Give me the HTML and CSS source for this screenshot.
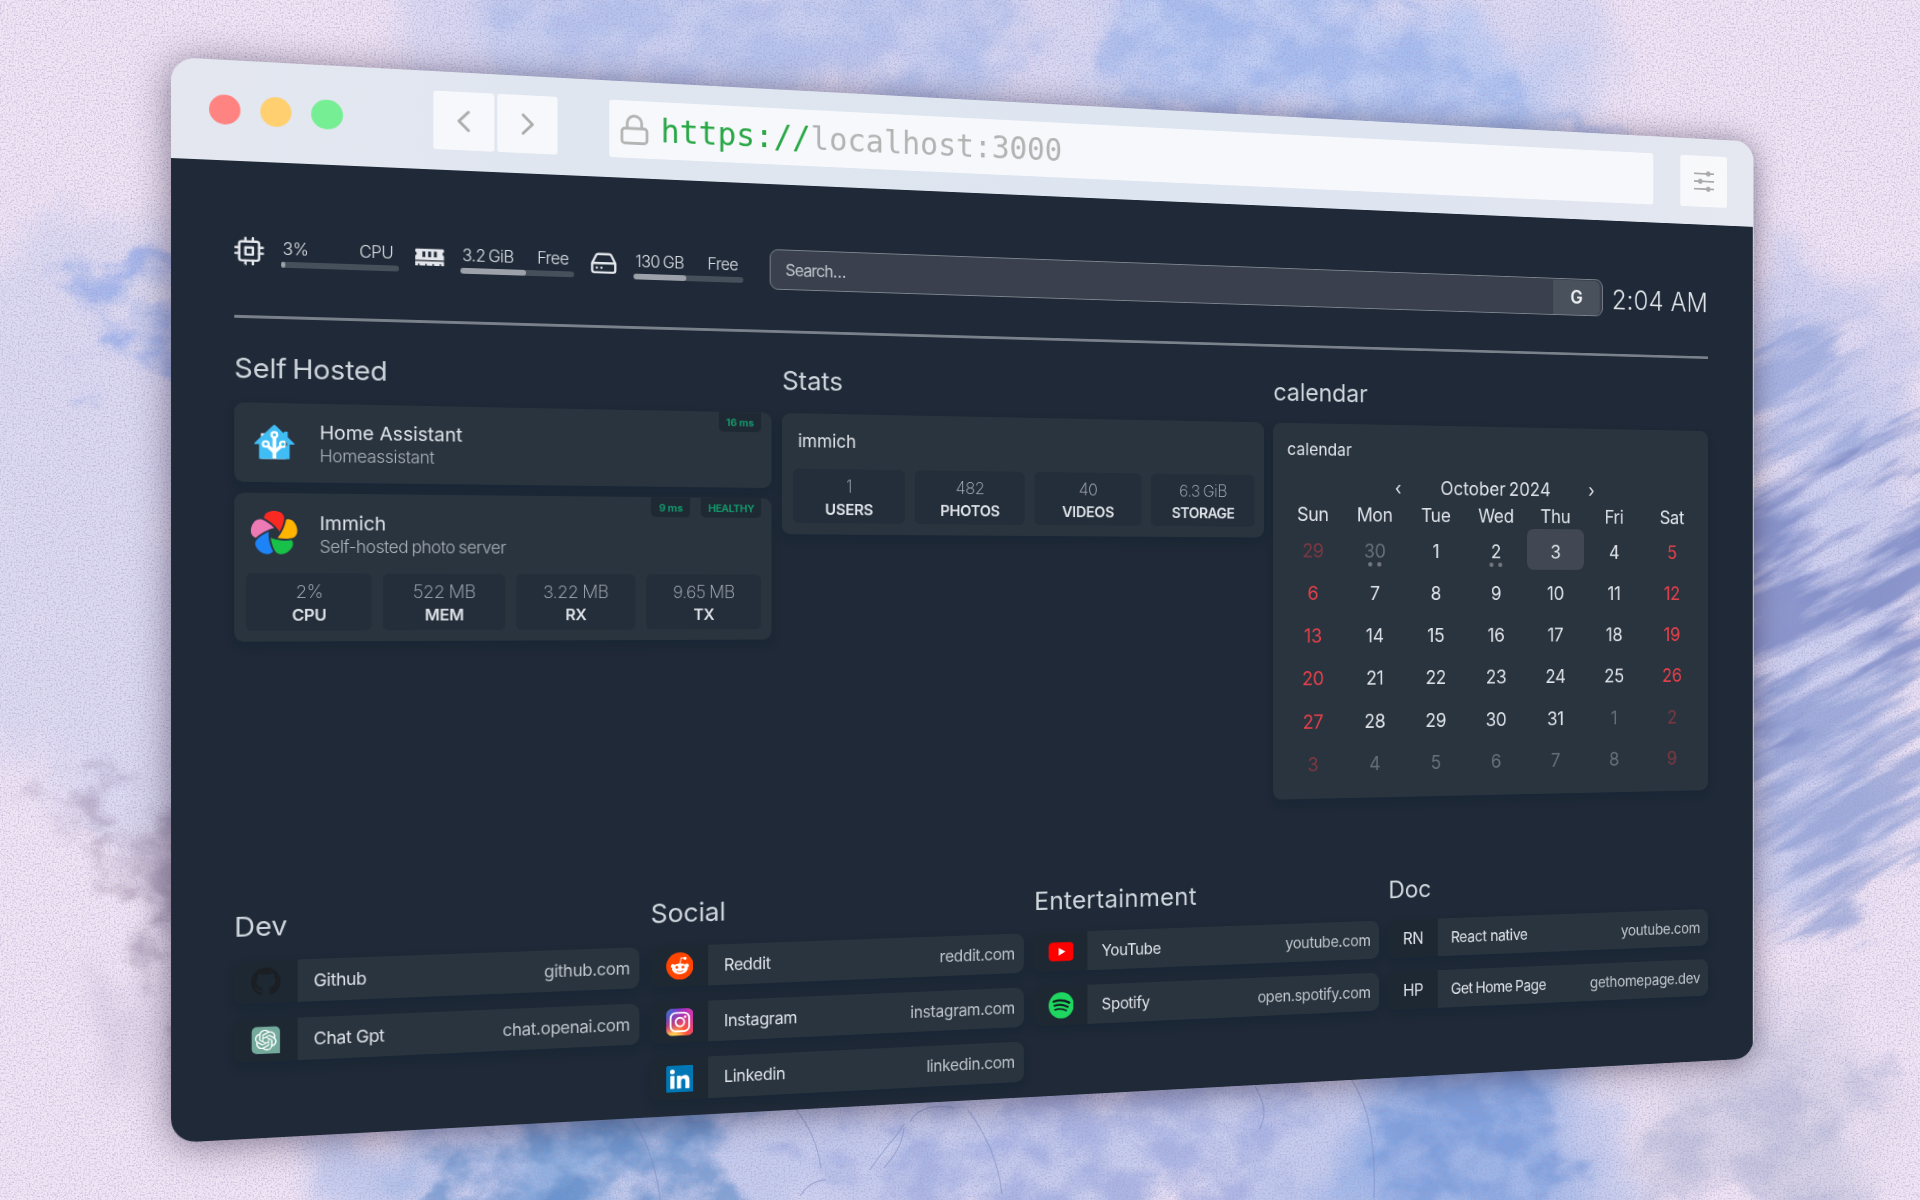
FILE: index.html
```html
<!DOCTYPE html>
<html lang="en">
<head>
<meta charset="utf-8">
<title>Homepage</title>
<link rel="stylesheet" href="styles.css">
</head>
<body>
<svg class="wallpaper" viewBox="0 0 1920 1200" aria-hidden="true">
  <defs>
    <filter id="paint" x="-20%" y="-20%" width="140%" height="140%">
      <feGaussianBlur stdDeviation="10" result="b"/>
      <feTurbulence type="fractalNoise" baseFrequency="0.012 0.016" numOctaves="8" seed="8" result="n"/>
      <feDisplacementMap in="b" in2="n" scale="170" xChannelSelector="R" yChannelSelector="G" result="d"/>
      <feTurbulence type="fractalNoise" baseFrequency="0.02 0.026" numOctaves="8" seed="21"/>
      <feColorMatrix values="0 0 0 0 0  0 0 0 0 0  0 0 0 0 0  3 0 0 0 -.95" result="m"/>
      <feComposite in="d" in2="m" operator="in"/>
    </filter>
    <filter id="streak" x="-30%" y="-30%" width="160%" height="160%">
      <feGaussianBlur stdDeviation="12" result="b"/>
      <feTurbulence type="fractalNoise" baseFrequency="0.007 0.03" numOctaves="8" seed="15" result="n"/>
      <feDisplacementMap in="b" in2="n" scale="190" xChannelSelector="R" yChannelSelector="G" result="d"/>
      <feTurbulence type="fractalNoise" baseFrequency="0.006 0.04" numOctaves="8" seed="33"/>
      <feColorMatrix values="0 0 0 0 0  0 0 0 0 0  0 0 0 0 0  4 0 0 0 -1.450" result="m"/>
      <feComposite in="d" in2="m" operator="in"/>
    </filter>
    <filter id="wash" x="-20%" y="-20%" width="140%" height="140%">
      <feGaussianBlur stdDeviation="26" result="b"/>
      <feTurbulence type="fractalNoise" baseFrequency="0.007" numOctaves="8" seed="4" result="n"/>
      <feDisplacementMap in="b" in2="n" scale="220" xChannelSelector="R" yChannelSelector="G"/>
    </filter>
    <filter id="grain" x="0" y="0" width="100%" height="100%">
      <feTurbulence type="fractalNoise" baseFrequency="0.55" numOctaves="3" seed="3"/>
      <feColorMatrix values="0 0 0 0 .33  0 0 0 0 .3  0 0 0 0 .5  0 1.6 0 0 -.72"/>
    </filter>
  </defs>
  <rect width="1920" height="1200" fill="#f0e4f5"/>
  <g filter="url(#wash)">
    <path fill="#dad8f2" d="M340-60h1300l-100 230H500L400 90z"/>
    <path fill="#dcd9f1" d="M-60 250l300-20v620l-300-120z"/>
    <path fill="#c0ccf0" opacity=".75" d="M500-40h520l-30 130-420 30z"/>
    <path fill="#b6caf4" opacity=".8" d="M1090-40h260l240 170-130 50-330-80z"/>
    <path fill="#cbcfef" opacity=".95" d="M1740 270l180 30v380l-60 230-130 40z"/>
    <path fill="#c6ccee" d="M310 1100l1330-80v220H330z"/>
    <path fill="#6d9dd8" opacity=".6" d="M450 1120l280-30-60 140H450z"/>
    <path fill="#8aabe6" opacity=".7" d="M1340 1070l200-10 30 180h-220z"/>
    <path fill="#a79fc2" opacity=".5" d="M120 800l70 20v260l-30-90z"/>
    <path fill="#d6d1e6" d="M1700 1060l200-10-100 160-160-10z"/>
  </g>
  <g filter="url(#paint)" opacity=".62">
    <path fill="#86a3e8" d="M80 275l200-30v190l-60-20-120-60z"/>
    <path fill="#a3b5ea" opacity=".7" d="M450-40h570l-60 190H600z"/>
    <path fill="#8fabe9" opacity=".75" d="M1100-30l260 10 260 160-160 60-330-110z"/>
    <path fill="#3f78bc" opacity=".8" d="M440 1120l310-40-40 160H440z"/>
    <path fill="#8799d8" opacity=".7" d="M800 1120l520-50-30 180-420-20z"/>
    <path fill="#5d88d2" opacity=".75" d="M1380 1050l180-20 0 200-180-10z"/>
    <path fill="#7e6c88" opacity=".65" d="M90 830l110-30 10 60v250l-70-140z"/>
    <path fill="#8f7f9e" opacity=".7" d="M20 775l80 0-30 70z"/>
    <path fill="#9da4cc" opacity=".5" d="M1640 1110l240-60-70 160-140 20z"/>
  </g>
  <g transform="rotate(-28 1830 600)" filter="url(#streak)" opacity=".8">
    <path fill="#6577bb" opacity=".85" d="M1690 480l290 20 10 160-300 40z"/>
    <path fill="#8597d0" opacity=".8" d="M1640 680l250 0-10 240-250-60z"/>
    <path fill="#8fa2da" opacity=".8" d="M1740 320l240 60v120l-260-30z"/>
  </g>
  <g fill="none" stroke="#6f83b8" stroke-opacity=".4" stroke-width="1.300">
    <path d="M870 1170c14-22 28-34 34-46M884 1168c10-12 18-22 20-40M910 1122c8-14 24-18 44-14M795 1108c14 18 22 34 26 60M630 1115c14 22 26 46 30 85M968 1110c18 24 30 50 34 84M1255 1086c10 18 12 30 4 44M1352 1080c16 26 24 60 22 118M800 1196c8-12 16-16 26-16"/>
  </g>
  <rect width="1920" height="1200" filter="url(#grain)" opacity=".7"/>
</svg>

<div class="window">
  <header class="toolbar">
    <div class="lights"><i class="light red"></i><i class="light amber"></i><i class="light green"></i></div>
    <div class="nav">
      <span class="tool"><svg width="16" height="26" viewBox="0 0 16 26"><path d="M13 3.500 3.500 13l9.500 9.500" class="chev"/></svg></span>
      <span class="tool"><svg width="16" height="26" viewBox="0 0 16 26"><path d="M3 3.500 12.500 13 3 22.500" class="chev"/></svg></span>
    </div>
    <div class="address">
      <svg class="lock" width="31" height="33" viewBox="0 0 31 33"><rect x="2" y="15" width="26" height="15.500" rx="3"/><path d="M7.500 15V9.500a7.500 7.500 0 0 1 15 0V15"/></svg>
      <span class="url"><b>https://</b>localhost:3000</span>
    </div>
    <span class="tool settings"><svg width="28" height="26" viewBox="0 0 28 26"><path d="M1 4h26M1 13h26M1 22h26" stroke="#a9a9a9" stroke-width="1.900"/><g fill="#a9a9a9"><circle cx="19.500" cy="4" r="2.900"/><circle cx="9" cy="13" r="2.900"/><circle cx="19.500" cy="22" r="2.900"/></g></svg></span>
  </header>

  <main class="page">
    <section class="info">
      <div class="resource">
        <svg class="ricon line" viewBox="0 0 24 24"><rect x="4" y="4" width="16" height="16" rx="2"/><rect x="9" y="9" width="6" height="6"/><path d="M9 1v3M15 1v3M9 20v3M15 20v3M20 9h3M20 14h3M1 9h3M1 14h3"/></svg>
        <div class="meter"><div class="labels"><span>3%</span><span>CPU</span></div><div class="bar"><i style="width:4%"></i></div></div>
      </div>
      <div class="resource">
        <svg class="ricon" viewBox="0 0 640 512" fill="currentColor"><path fill-rule="evenodd" d="M640 131V96c0-18-14-32-32-32H32C14 64 0 78 0 96v35c19 7 32 24 32 45s-13 38-32 45v99h640v-99c-19-7-32-24-32-45s13-38 32-45zM224 256h-64V128h64zm128 0h-64V128h64zm128 0h-64V128h64zM0 448h64v-27a16 16 0 0 1 32 0v27h128v-27a16 16 0 0 1 32 0v27h128v-27a16 16 0 0 1 32 0v27h128v-27a16 16 0 0 1 32 0v27h64v-96H0z"/></svg>
        <div class="meter"><div class="labels"><span>3.2 GiB</span><span>Free</span></div><div class="bar"><i style="width:57%"></i></div></div>
      </div>
      <div class="resource">
        <svg class="ricon line" viewBox="0 0 24 24"><path d="M22 12H2M5.450 5.110 2 12v6a2 2 0 0 0 2 2h16a2 2 0 0 0 2-2v-6l-3.450-6.890A2 2 0 0 0 16.760 4H7.240a2 2 0 0 0-1.790 1.110zM6 16h.01M10 16h.01"/></svg>
        <div class="meter"><div class="labels"><span>130 GB</span><span>Free</span></div><div class="bar"><i style="width:48%"></i></div></div>
      </div>
      <div class="search"><span class="placeholder">Search…</span><span class="engine">G</span></div>
      <div class="clock">2:04 AM</div>
    </section>
    <hr class="rule">

    <section class="services">
      <div class="group">
        <h2>Self Hosted</h2>
        <article class="card">
          <div class="head">
            <span class="logo"><svg width="39" height="34.400" viewBox="1.400 2.300 21.200 18.700"><path fill="#fff" d="M5 7h13v14H5z M12 4l6 6H6z"/><path fill="#41bdf5" d="M21.800,13H20V21H13V17.670L15.790,14.880L16.500,15C17.660,15 18.600,14.060 18.600,12.900C18.600,11.740 17.660,10.800 16.500,10.800A2.100,2.100 0 0,0 14.400,12.900L14.500,13.610L13,15.130V9.650C13.660,9.290 14.100,8.600 14.100,7.800A2.100,2.100 0 0,0 12,5.700A2.100,2.100 0 0,0 9.900,7.800C9.900,8.600 10.340,9.290 11,9.650V15.130L9.500,13.610L9.600,12.900A2.100,2.100 0 0,0 7.500,10.800A2.100,2.100 0 0,0 5.400,12.900A2.100,2.100 0 0,0 7.500,15L8.210,14.880L11,17.670V21H4V13H2.250C1.830,13 1.420,13 1.420,12.790C1.430,12.570 1.850,12.150 2.280,11.720L11,3C11.330,2.670 11.670,2.330 12,2.330C12.330,2.330 12.670,2.670 13,3L17,7V6H19V9L21.780,11.780C22.180,12.180 22.590,12.590 22.600,12.800C22.600,13 22.200,13 21.800,13Z"/><g fill="#41bdf5"><circle cx="7.500" cy="12.900" r=".9"/><circle cx="16.500" cy="12.900" r=".9"/><circle cx="12" cy="7.800" r=".9"/></g></svg></span>
            <div><div class="name">Home Assistant</div><div class="desc">Homeassistant</div></div>
          </div>
          <div class="badges"><span>16 ms</span></div>
        </article>
        <article class="card">
          <div class="head">
            <span class="logo"><svg width="44.700" height="44" viewBox="103 95 587 581"><path fill="#fa2921" d="M375.480,267.630c38.640,34.210,69.780,70.870,89.820,105.420c34.420-61.560,57.420-134.710,57.710-181.300c0-.33,0-.63,0-.91c0-68.940-68.770-95.770-128.010-95.770s-128.010,26.830-128.010,95.770c0,.94,0,2.200,0,3.720C300.010,209.240,339.150,235.470,375.480,267.630z"/><path fill="#ed79b5" d="M164.700,455.630c24.150-26.870,61.200-55.990,103.010-80.610c44.480-26.180,88.970-44.470,128.020-52.840c-47.910-51.760-110.370-96.240-154.600-110.910c-.31-.1-.6-.19-.86-.28c-65.570-21.300-112.340,35.810-130.640,92.150c-18.300,56.340-14.040,130.040,51.530,151.340C162.050,454.770,163.250,455.160,164.700,455.630z"/><path fill="#ffb400" d="M681.070,302.190c-18.300-56.340-65.070-113.450-130.640-92.150c-.9,.29-2.100,.68-3.540,1.150c-3.750,35.930-16.600,81.270-35.960,125.760c-20.590,47.320-45.840,88.270-72.510,118c69.180,13.720,145.860,12.980,190.260-1.140c.31-.1,.6-.2,.86-.28C695.110,432.220,699.370,358.520,681.070,302.190z"/><path fill="#1e83f7" d="M336.540,510.710c-11.150-50.390-14.800-98.360-10.700-138.080c-64.030,29.570-125.630,75.230-153.260,112.760c-.19,.26-.37,.51-.53,.73c-40.520,55.780-.66,117.910,47.270,152.720c47.920,34.820,119.330,53.540,159.860-2.240c.56-.76,1.300-1.780,2.190-3.010C363.280,602.320,347.020,558.080,336.540,510.710z"/><path fill="#18c249" d="M617.570,482.520c-35.330,7.540-82.420,9.330-130.720,4.660c-51.370-4.960-98.110-16.320-134.630-32.500c8.330,70.030,32.730,142.730,59.880,180.600c.19,.26,.37,.51,.53,.73c40.520,55.780,111.930,37.060,159.860,2.240c47.920-34.820,87.790-96.950,47.270-152.720C619.200,484.770,618.460,483.750,617.570,482.520z"/></svg></span>
            <div><div class="name">Immich</div><div class="desc long">Self-hosted photo server</div></div>
          </div>
          <div class="badges"><span>9 ms</span><span class="healthy">HEALTHY</span></div>
          <div class="stats">
            <div class="stat"><span>2%</span><b>CPU</b></div>
            <div class="stat"><span>522 MB</span><b>MEM</b></div>
            <div class="stat"><span>3.22 MB</span><b>RX</b></div>
            <div class="stat"><span>9.65 MB</span><b>TX</b></div>
          </div>
        </article>
      </div>

      <div class="group">
        <h2>Stats</h2>
        <article class="card">
          <div class="title">immich</div>
          <div class="stats">
            <div class="stat"><span>1</span><b>USERS</b></div>
            <div class="stat"><span>482</span><b>PHOTOS</b></div>
            <div class="stat"><span>40</span><b>VIDEOS</b></div>
            <div class="stat"><span>6.3 GiB</span><b class="tight">STORAGE</b></div>
          </div>
        </article>
      </div>

      <div class="group">
        <h2>calendar</h2>
        <article class="card calendar">
          <div class="title">calendar</div>
          <div class="month"><span>‹</span><span class="mname">October 2024</span><span>›</span></div>
          <div class="week names"><span>Sun</span><span>Mon</span><span>Tue</span><span>Wed</span><span>Thu</span><span>Fri</span><span>Sat</span></div>
          <div class="week"><span class="we dim">29</span><span class="dim dots">30</span><span>1</span><span class="dots">2</span><span class="today">3</span><span>4</span><span class="we">5</span></div>
          <div class="week"><span class="we">6</span><span>7</span><span>8</span><span>9</span><span>10</span><span>11</span><span class="we">12</span></div>
          <div class="week"><span class="we">13</span><span>14</span><span>15</span><span>16</span><span>17</span><span>18</span><span class="we">19</span></div>
          <div class="week"><span class="we">20</span><span>21</span><span>22</span><span>23</span><span>24</span><span>25</span><span class="we">26</span></div>
          <div class="week"><span class="we">27</span><span>28</span><span>29</span><span>30</span><span>31</span><span class="dim">1</span><span class="we dim">2</span></div>
          <div class="week"><span class="we dim">3</span><span class="dim">4</span><span class="dim">5</span><span class="dim">6</span><span class="dim">7</span><span class="dim">8</span><span class="we dim">9</span></div>
        </article>
      </div>
    </section>

    <section class="bookmarks">
      <div class="group">
        <h2>Dev</h2>
        <a class="mark"><span class="ico"><svg viewBox="0 0 16 16" fill="#1b1f23"><path d="M8 0C3.580 0 0 3.580 0 8c0 3.540 2.290 6.530 5.470 7.590.4.070.55-.17.55-.38 0-.19-.01-.82-.01-1.490-2.010.37-2.530-.49-2.690-.94-.09-.23-.48-.94-.82-1.130-.28-.15-.68-.52-.01-.53.63-.01 1.080.58 1.230.82.72 1.210 1.870.87 2.330.66.07-.52.28-.87.51-1.070-1.780-.2-3.640-.89-3.640-3.950 0-.87.31-1.590.82-2.150-.08-.2-.36-1.020.08-2.120 0 0 .67-.21 2.200.82.64-.18 1.320-.27 2-.27s1.360.09 2 .27c1.530-1.040 2.200-.82 2.200-.82.44 1.100.16 1.920.08 2.120.51.56.82 1.270.82 2.150 0 3.070-1.870 3.750-3.650 3.950.29.25.54.73.54 1.480 0 1.070-.01 1.930-.01 2.200 0 .21.15.46.55.38A8.010 8.010 0 0 0 16 8c0-4.420-3.580-8-8-8z"/></svg></span><span class="lab">Github</span><span class="dom">github.com</span></a>
        <a class="mark"><span class="ico"><svg viewBox="0 0 40 40"><path fill="#74aa9c" d="M8 1h24a7 7 0 0 1 7 7v31H8a7 7 0 0 1-7-7V8a7 7 0 0 1 7-7z"/><path fill="#fff" transform="translate(5.300 5.300) scale(1.220)" d="M22.282 9.821a5.985 5.985 0 0 0-.516-4.911 6.046 6.046 0 0 0-6.510-2.900A6.065 6.065 0 0 0 4.981 4.182a5.985 5.985 0 0 0-3.998 2.900 6.046 6.046 0 0 0 .743 7.097 5.980 5.980 0 0 0 .511 4.911 6.051 6.051 0 0 0 6.515 2.900A5.985 5.985 0 0 0 13.260 24a6.056 6.056 0 0 0 5.772-4.206 5.989 5.989 0 0 0 3.998-2.900 6.056 6.056 0 0 0-.748-7.073zm-9.022 12.608a4.476 4.476 0 0 1-2.876-1.041l.142-.080 4.778-2.758a.795.795 0 0 0 .393-.681v-6.737l2.020 1.169a.071.071 0 0 1 .038.052v5.583a4.504 4.504 0 0 1-4.495 4.494zm-9.661-4.125a4.471 4.471 0 0 1-.535-3.014l.142.085 4.783 2.758a.771.771 0 0 0 .781 0l5.843-3.369v2.332a.080.080 0 0 1-.033.062L9.740 19.950a4.499 4.499 0 0 1-6.141-1.646zM2.341 7.896a4.485 4.485 0 0 1 2.366-1.973V11.600a.766.766 0 0 0 .388.677l5.814 3.354-2.020 1.169a.076.076 0 0 1-.071 0l-4.830-2.787A4.504 4.504 0 0 1 2.341 7.872zm16.596 3.856L13.104 8.364 15.119 7.200a.076.076 0 0 1 .071 0l4.830 2.791a4.494 4.494 0 0 1-.677 8.104v-5.677a.790.790 0 0 0-.407-.667zm2.011-3.023l-.142-.085-4.774-2.782a.776.776 0 0 0-.785 0L9.409 9.230V6.897a.066.066 0 0 1 .028-.062l4.830-2.787a4.499 4.499 0 0 1 6.680 4.660zM8.307 12.863l-2.020-1.164a.080.080 0 0 1-.038-.057V6.074a4.499 4.499 0 0 1 7.376-3.454l-.142.081L8.704 5.459a.795.795 0 0 0-.393.681zm1.098-2.365l2.602-1.500 2.607 1.500v2.999l-2.597 1.500-2.607-1.500Z"/></svg></span><span class="lab">Chat Gpt</span><span class="dom">chat.openai.com</span></a>
      </div>
      <div class="group">
        <h2>Social</h2>
        <a class="mark"><span class="ico"><svg viewBox="0 0 40 40"><circle cx="20" cy="20" r="20" fill="#ff4500"/><g fill="#fff"><ellipse cx="20" cy="24" rx="11.500" ry="8"/><circle cx="9.800" cy="19.800" r="3"/><circle cx="30.200" cy="19.800" r="3"/><circle cx="27.500" cy="9" r="2.300"/></g><path d="M20 17l1.900-9 5.500 1.200" fill="none" stroke="#fff" stroke-width="1.300"/><g fill="#ff4500"><circle cx="15.500" cy="21.800" r="2.100"/><circle cx="24.500" cy="21.800" r="2.100"/></g><path d="M15.500 27.200c2.400 2 6.600 2 9 0" fill="none" stroke="#ff4500" stroke-width="1.300" stroke-linecap="round"/></svg></span><span class="lab">Reddit</span><span class="dom">reddit.com</span></a>
        <a class="mark"><span class="ico"><svg viewBox="0 0 40 40"><defs><radialGradient id="ig1" cx=".27" cy="1.080" r="1"><stop offset="0" stop-color="#fd5"/><stop offset=".1" stop-color="#fd5"/><stop offset=".5" stop-color="#ff543e"/><stop offset="1" stop-color="#c837ab"/></radialGradient><radialGradient id="ig2" cx="-.1" cy="0" r=".95"><stop offset="0" stop-color="#3771c8"/><stop offset=".2" stop-color="#3771c8"/><stop offset="1" stop-color="#60f" stop-opacity="0"/></radialGradient></defs><rect width="40" height="40" rx="9" fill="url(#ig1)"/><rect width="40" height="40" rx="9" fill="url(#ig2)"/><g fill="none" stroke="#fff" stroke-width="2.600"><rect x="6.400" y="6.400" width="27.200" height="27.200" rx="7.500"/><circle cx="20" cy="20" r="6.400"/></g><circle cx="27.700" cy="12.400" r="1.800" fill="#fff"/></svg></span><span class="lab">Instagram</span><span class="dom">instagram.com</span></a>
        <a class="mark"><span class="ico"><svg viewBox="0 0 40 40"><rect width="40" height="40" rx="3" fill="#0077b5"/><g fill="#fff"><circle cx="9" cy="9.200" r="3.500"/><rect x="6" y="15" width="6" height="19"/><path d="M15.700 15h5.700v2.600c.9-1.700 3-3.100 5.800-3.100 5.600 0 6.800 3.600 6.800 8.600V34h-6v-9.600c0-2.400-.3-4.800-3-4.800s-3.300 2.200-3.300 4.700V34h-6z"/></g></svg></span><span class="lab">Linkedin</span><span class="dom">linkedin.com</span></a>
      </div>
      <div class="group">
        <h2 class="wide">Entertainment</h2>
        <a class="mark"><span class="ico"><svg viewBox="0 0 40 40"><rect y="6" width="40" height="28.500" rx="6.500" fill="#f00"/><path d="M16 14.200v12L26.500 20.200z" fill="#fff"/></svg></span><span class="lab">YouTube</span><span class="dom">youtube.com</span></a>
        <a class="mark"><span class="ico"><svg viewBox="0 0 40 40"><circle cx="20" cy="20" r="20" fill="#1ed760"/><g fill="none" stroke="#121a20" stroke-linecap="round"><path d="M8 13.800c8-2.300 17.500-1.500 24.500 2.400" stroke-width="3.600"/><path d="M9 20.300c7-2 15-1.200 21.500 2.400" stroke-width="3"/><path d="M10 26.300c6-1.500 12.500-.9 18 2.100" stroke-width="2.500"/></g></svg></span><span class="lab">Spotify</span><span class="dom">open.spotify.com</span></a>
      </div>
      <div class="group">
        <h2>Doc</h2>
        <a class="mark"><span class="ico abbr">RN</span><span class="lab">React native</span><span class="dom">youtube.com</span></a>
        <a class="mark"><span class="ico abbr">HP</span><span class="lab tight">Get Home Page</span><span class="dom">gethomepage.dev</span></a>
      </div>
    </section>
  </main>
</div>
</body>
</html>
```
FILE: styles.css
```css
* { box-sizing: border-box; }

body {
  margin: 0;
  width: 1920px;
  height: 1200px;
  overflow: hidden;
  position: relative;
  background: #ebdff1;
  font-family: Inter, "Liberation Sans", sans-serif;
  color: #dfe3e8;
}

.wallpaper { position: absolute; inset: 0; width: 1920px; height: 1200px; }

/* The window is laid out flat and then turned about its left edge. */
.window {
  position: absolute;
  left: 0;
  top: 0;
  width: 1768px;
  height: 1086px;
  display: flex;
  flex-direction: column;
  transform-origin: 0 0;
  transform: matrix3d(1.078165, 0.062647, 0, 0.000104412, 0, 1, 0, 0, 0, 0, 1, 0, 171, 57, 0, 1);
  border-radius: 24px;
  overflow: hidden;
  background: #e3e8f0;
  box-shadow: 0 4px 36px rgba(48, 38, 66, .6);
}

/* browser toolbar */
.toolbar {
  flex: none;
  height: 100.500px;
  display: flex;
  align-items: center;
  padding: 0 35px 0 35.700px;
  background: linear-gradient(90deg, #e4e7f0 0, #dfe6f0 25%, #dde5f0 60%, #e0e5f0 85%, #e5e8f0 100%);
}
.lights { display: flex; gap: 18.900px; width: 218px; }
.light { width: 30.400px; height: 30.400px; border-radius: 50%; }
.red { background: #ff8481; }
.amber { background: #ffcf70; }
.green { background: #76ef94; }
.nav { display: flex; gap: 3.800px; width: 178px; }
.tool {
  width: 61px;
  height: 60px;
  border-radius: 3px;
  background: rgba(255, 255, 255, .72);
  display: flex;
  align-items: center;
  justify-content: center;
}
.chev { fill: none; stroke: #adadad; stroke-width: 3; stroke-linecap: round; stroke-linejoin: round; }
.address {
  width: 1205px;
  height: 60px;
  border-radius: 3px;
  background: rgba(255, 255, 255, .72);
  display: flex;
  align-items: center;
  padding-left: 11.500px;
}
.lock { fill: none; stroke: #b4b4b4; stroke-width: 2.800; margin-right: 11px; }
.url { font: 32.950px/59.500px "DejaVu Sans Mono", monospace; color: #b3b3b3; white-space: pre; }
.url b { font-weight: 400; color: #28a745; }
.settings { margin-left: auto; }

/* dashboard */
.page {
  flex: 1;
  margin-right: 1.500px;
  padding: 69.500px 58.500px 0 60px;
  background: #1f2937;
}
.info { display: flex; height: 43.300px; align-items: center; }
.resource { display: flex; width: 176.200px; align-self: flex-start; }
.ricon { width: 28.600px; height: 28.600px; margin: 7.300px 16px 0 0; color: #e3e6ea; }
.line { fill: none; stroke: currentColor; stroke-width: 2; stroke-linecap: round; stroke-linejoin: round; }
.meter { width: 115.500px; padding-top: 7.200px; }
.labels {
  display: flex;
  justify-content: space-between;
  padding: 0 6px 0 2px;
  font-size: 16.600px;
  line-height: 22px;
  letter-spacing: -.5px;
  word-spacing: -1px;
  font-weight: 350;
  white-space: nowrap;
}
.bar { height: 5.700px; margin-top: 2.200px; border-radius: 3px; background: #45505b; }
.bar i { display: block; height: 100%; border-radius: 3px; background: #9da1a9; }
.search {
  width: 972.500px;
  height: 43.300px;
  margin-left: 11px;
  border: 1.400px solid #7c838c;
  border-radius: 9px;
  background: #3a404d;
  display: flex;
  justify-content: space-between;
  align-items: center;
  padding-right: 3px;
}
.placeholder { padding-left: 16.200px; font-size: 17px; letter-spacing: -.9px; color: #c3c7cd; }
.engine {
  width: 59px;
  height: 40px;
  border-radius: 0 7px 7px 0;
  background: #49515c;
  font-size: 21px;
  font-weight: 600;
  line-height: 40px;
  text-align: center;
  color: #eef0f3;
}
.clock { margin-left: auto; font-size: 30.800px; line-height: 43px; padding-top: 1.500px; letter-spacing: .2px; font-weight: 350; white-space: nowrap; }
.rule { border: 0; height: 2.400px; margin: 42.900px 0 29.600px; background: #7a818b; }

.services { display: grid; grid-template-columns: repeat(3, 1fr); gap: 11.400px; height: 479.100px; align-items: start; }
.bookmarks { display: grid; grid-template-columns: repeat(4, 1fr); gap: 11.400px; margin-top: 84px; align-items: start; }
h2 {
  margin: 0 0 12.700px;
  font-size: 27.700px;
  line-height: 43px;
  font-weight: 400;
  letter-spacing: -.1px;
  word-spacing: -2.500px;
  color: #cfd5dc;
}
h2.wide { letter-spacing: .3px; }

.card {
  position: relative;
  border-radius: 9px;
  background: #2a343f;
  box-shadow: 0 5px 8px rgba(18, 36, 52, .45);
}
.card + .card { margin-top: 11px; }
.head { height: 80.500px; display: flex; padding-top: 18.400px; }
.logo { width: 77px; height: 42.600px; margin-right: 5.200px; display: flex; align-items: center; justify-content: center; }
.name { font-size: 19px; line-height: 23px; font-weight: 430; }
.desc { font-size: 17px; line-height: 24px; font-weight: 300; color: #adb3bb; letter-spacing: -.3px; }
.desc.long { letter-spacing: -.42px; word-spacing: -1px; }
.badges { position: absolute; top: 0; right: 10.400px; display: flex; gap: 10.700px; }
.badges span {
  height: 20.800px;
  padding: 0 8px;
  border-radius: 0 0 5px 5px;
  background: #1f2934;
  color: #149468;
  font-size: 10.900px;
  font-weight: 650;
  line-height: 22px;
  letter-spacing: -.1px;
  word-spacing: -.3px;
}
.badges .healthy { letter-spacing: -.4px; padding: 0 7.800px; }
.stats { display: flex; gap: 11.200px; padding: 0 10.400px 11.400px 11.400px; }
.stat {
  flex: 1;
  height: 58px;
  padding-top: 7px;
  border-radius: 6px;
  background: #242e3a;
  text-align: center;
  display: flex;
  flex-direction: column;
  white-space: nowrap;
}
.stat span { font-size: 18px; line-height: 23.200px; font-weight: 250; letter-spacing: -.3px; word-spacing: -1px; color: #b6bbc3; }
.stat b { font-size: 16.200px; line-height: 24px; font-weight: 620; letter-spacing: -.25px; }
.stat b.tight { letter-spacing: -.5px; }
.title { padding: 17.500px 17px 0; height: 59.600px; font-size: 18.500px; line-height: 24px; font-weight: 400; }

.calendar { height: 423px; }
.calendar .title { height: 56.700px; padding-left: 16.500px; font-size: 18.600px; letter-spacing: .15px; }
.month { display: flex; justify-content: center; gap: 46px; font-size: 21px; line-height: 29px; height: 28px; }
.mname { width: 141px; text-align: center; letter-spacing: .1px; word-spacing: -2px; white-space: nowrap; }
.week { display: grid; grid-template-columns: repeat(7, 74.600px); padding-left: 9.900px; font-size: 21.300px; height: 48.200px; line-height: 47.500px; text-align: center; }
.week span { position: relative; height: 47.500px; margin: 0 1.300px; padding-top: 3px; border-radius: 8px; letter-spacing: -.3px; }
.week.names { height: 32.300px; line-height: 28px; letter-spacing: 0; }
.week .we { color: #e5404a; }
.week .dim { color: #66707b; }
.week .we.dim { color: #7c3841; }
.week .today { background: #414853; }
.dots::before, .dots::after { content: ""; position: absolute; bottom: 3.800px; width: 5px; height: 5px; border-radius: 50%; background: #74767e; }
.dots::before { left: 28px; }
.dots::after { right: 28px; }

.mark {
  display: flex;
  height: 43.200px;
  margin-bottom: 16px;
  border-radius: 9px;
  overflow: hidden;
  background: #2a343f;
  box-shadow: 0 5px 8px rgba(18, 36, 52, .45);
  font-size: 17.200px;
  line-height: 44.400px;
  white-space: nowrap;
  letter-spacing: -.35px;
}
.ico { width: 60.600px; background: #1e2833; display: flex; align-items: center; justify-content: center; }
.ico svg { width: 28.600px; height: 28.600px; }
.abbr { font-size: 18.500px; line-height: 45px; font-weight: 400; }
.lab { padding-left: 16px; }
.lab.tight { letter-spacing: -.5px; word-spacing: -1px; }
.dom { margin-left: auto; padding-right: 10.300px; color: #bfc4ca; }
```
